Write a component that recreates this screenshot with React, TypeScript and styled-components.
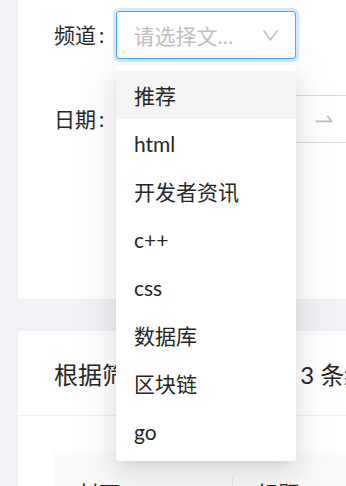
import styled, { createGlobalStyle } from "styled-components";

const GlobalStyle = createGlobalStyle`
  html, body {
    margin: 0;
    padding: 0;
    background: #f0f2f5;
    overflow: hidden;
  }
  body {
    font-family: Lato, "Noto Sans CJK SC", sans-serif;
    color: #262626;
  }
`;

const channels = ["推荐", "html", "开发者资讯", "c++", "css", "数据库", "区块链", "go"];

const Page = styled.div`
  display: flex;
  flex-direction: column;
  gap: 32px;
  padding-left: 18px;
  width: 460px;
`;

const Card = styled.div<{ $top?: string }>`
  background: #fff;
  border-radius: 3px;
  padding: ${(p) => p.$top ?? "36px"} 36px 36px;
`;

const FormRow = styled.div`
  display: flex;
  align-items: center;
  height: 48px;
  margin-bottom: 36px;
`;

const Label = styled.label`
  flex: 0 0 62px;
  font-size: 21px;
  line-height: 48px;
  color: #262626;
  white-space: nowrap;
  &::after {
    content: ":";
    margin: 0 0 0 3px;
  }
`;

const Spacer = styled.div`
  flex: 0 0 62px;
`;

const SelectWrap = styled.div`
  position: relative;
  width: 180px;
  z-index: 2;
`;

const SelectBox = styled.div`
  box-sizing: border-box;
  display: flex;
  align-items: center;
  height: 48px;
  padding: 0 14px 0 16.5px;
  border: 1.5px solid #40a9ff;
  border-radius: 3px;
  box-shadow: 0 0 0 3px rgba(24, 144, 255, 0.2);
  background: #fff;
`;

const Placeholder = styled.span`
  flex: 1;
  min-width: 0;
  margin-right: 12px;
  font-size: 21px;
  color: #bfbfbf;
  white-space: nowrap;
  overflow: hidden;
  text-overflow: ellipsis;
`;

const Dropdown = styled.div`
  position: absolute;
  top: 54px;
  left: 0;
  width: 180px;
  box-sizing: border-box;
  padding: 6px 0;
  background: #fff;
  border-radius: 3px;
  box-shadow: 0 4.5px 9px -6px rgba(0, 0, 0, 0.12),
    0 9px 24px 0 rgba(0, 0, 0, 0.08), 0 13.5px 42px 12px rgba(0, 0, 0, 0.05);
`;

const Option = styled.div<{ $active?: boolean }>`
  display: flex;
  align-items: center;
  height: 48px;
  padding: 0 18px;
  font-size: 21px;
  color: #262626;
  background: ${(p) => (p.$active ? "#f5f5f5" : "transparent")};
`;

const RangePicker = styled.div`
  box-sizing: border-box;
  display: flex;
  align-items: center;
  width: 360px;
  height: 48px;
  padding: 0 16.5px;
  border: 1.5px solid #d9d9d9;
  border-radius: 3px;
  background: #fff;
`;

const RangeInput = styled.span`
  flex: 0 0 166px;
  font-size: 21px;
  color: #bfbfbf;
  white-space: nowrap;
`;

const RangeSep = styled.span`
  display: flex;
  align-items: center;
  padding: 0 12px;
  color: #bfbfbf;
`;

const Button = styled.button`
  height: 48px;
  padding: 0 22px;
  border: 1.5px solid #1890ff;
  border-radius: 3px;
  background: #1890ff;
  color: #fff;
  font-family: inherit;
  font-size: 21px;
`;

const ResultCard = styled.div`
  background: #fff;
  border-radius: 3px;
`;

const CardHead = styled.div`
  display: flex;
  align-items: center;
  height: 84px;
  padding: 0 36px;
  border-bottom: 1.5px solid #f0f0f0;
`;

const CardTitle = styled.div`
  font-size: 24px;
  color: #262626;
  white-space: nowrap;
`;

const CardBody = styled.div`
  padding: 36px;
`;

const TableHead = styled.div`
  display: flex;
  background: #fafafa;
  border-bottom: 1.5px solid #f0f0f0;
`;

const HeadCell = styled.div<{ $width?: number }>`
  position: relative;
  flex: ${(p) => (p.$width ? `0 0 ${p.$width}px` : "1")};
  box-sizing: border-box;
  padding: 24px;
  font-size: 21px;
  line-height: 33px;
  color: #262626;
  &:not(:last-child)::before {
    content: "";
    position: absolute;
    right: 0;
    top: 50%;
    transform: translateY(-50%);
    width: 1.5px;
    height: 1.6em;
    background: rgba(0, 0, 0, 0.06);
  }
`;

const ChevronDown = () => (
  <svg width="21" height="21" viewBox="0 0 1024 1024" fill="#bfbfbf">
    <path d="M884 256h-75c-5.1 0-9.9 2.5-12.9 6.7L512 654.2 227.9 262.7c-3-4.2-7.8-6.7-12.9-6.7h-75c-6.5 0-10.3 7.4-6.5 12.7l352.6 486.1c12.8 17.6 39 17.6 51.7 0l352.6-486.1c3.9-5.3.1-12.7-6.4-12.7z" />
  </svg>
);

const SwapRight = () => (
  <svg width="24" height="24" viewBox="0 0 1024 1024" fill="#bfbfbf">
    <path d="M873.1 596.2l-164-208A32 32 0 00684 376h-64.8c-6.7 0-10.4 7.7-6.3 13l144.3 183H152c-4.4 0-8 3.6-8 8v60c0 4.4 3.6 8 8 8h695.9c26.8 0 41.7-30.8 25.2-51.8z" />
  </svg>
);

export default function App() {
  return (
    <>
      <GlobalStyle />
      <Page>
        <Card $top="11px">
          <FormRow>
            <Label>频道</Label>
            <SelectWrap>
              <SelectBox>
                <Placeholder>请选择文章频道</Placeholder>
                <ChevronDown />
              </SelectBox>
              <Dropdown>
                {channels.map((c, i) => (
                  <Option key={c} $active={i === 0}>
                    {c}
                  </Option>
                ))}
              </Dropdown>
            </SelectWrap>
          </FormRow>
          <FormRow>
            <Label>日期</Label>
            <RangePicker>
              <RangeInput>开始日期</RangeInput>
              <RangeSep>
                <SwapRight />
              </RangeSep>
              <RangeInput>结束日期</RangeInput>
            </RangePicker>
          </FormRow>
          <FormRow>
            <Spacer />
            <Button>筛选</Button>
          </FormRow>
        </Card>
        <ResultCard>
          <CardHead>
            <CardTitle>根据筛选条件共查询到 3 条结果：</CardTitle>
          </CardHead>
          <CardBody>
            <TableHead>
              <HeadCell $width={179}>封面</HeadCell>
              <HeadCell>标题</HeadCell>
            </TableHead>
          </CardBody>
        </ResultCard>
      </Page>
    </>
  );
}
